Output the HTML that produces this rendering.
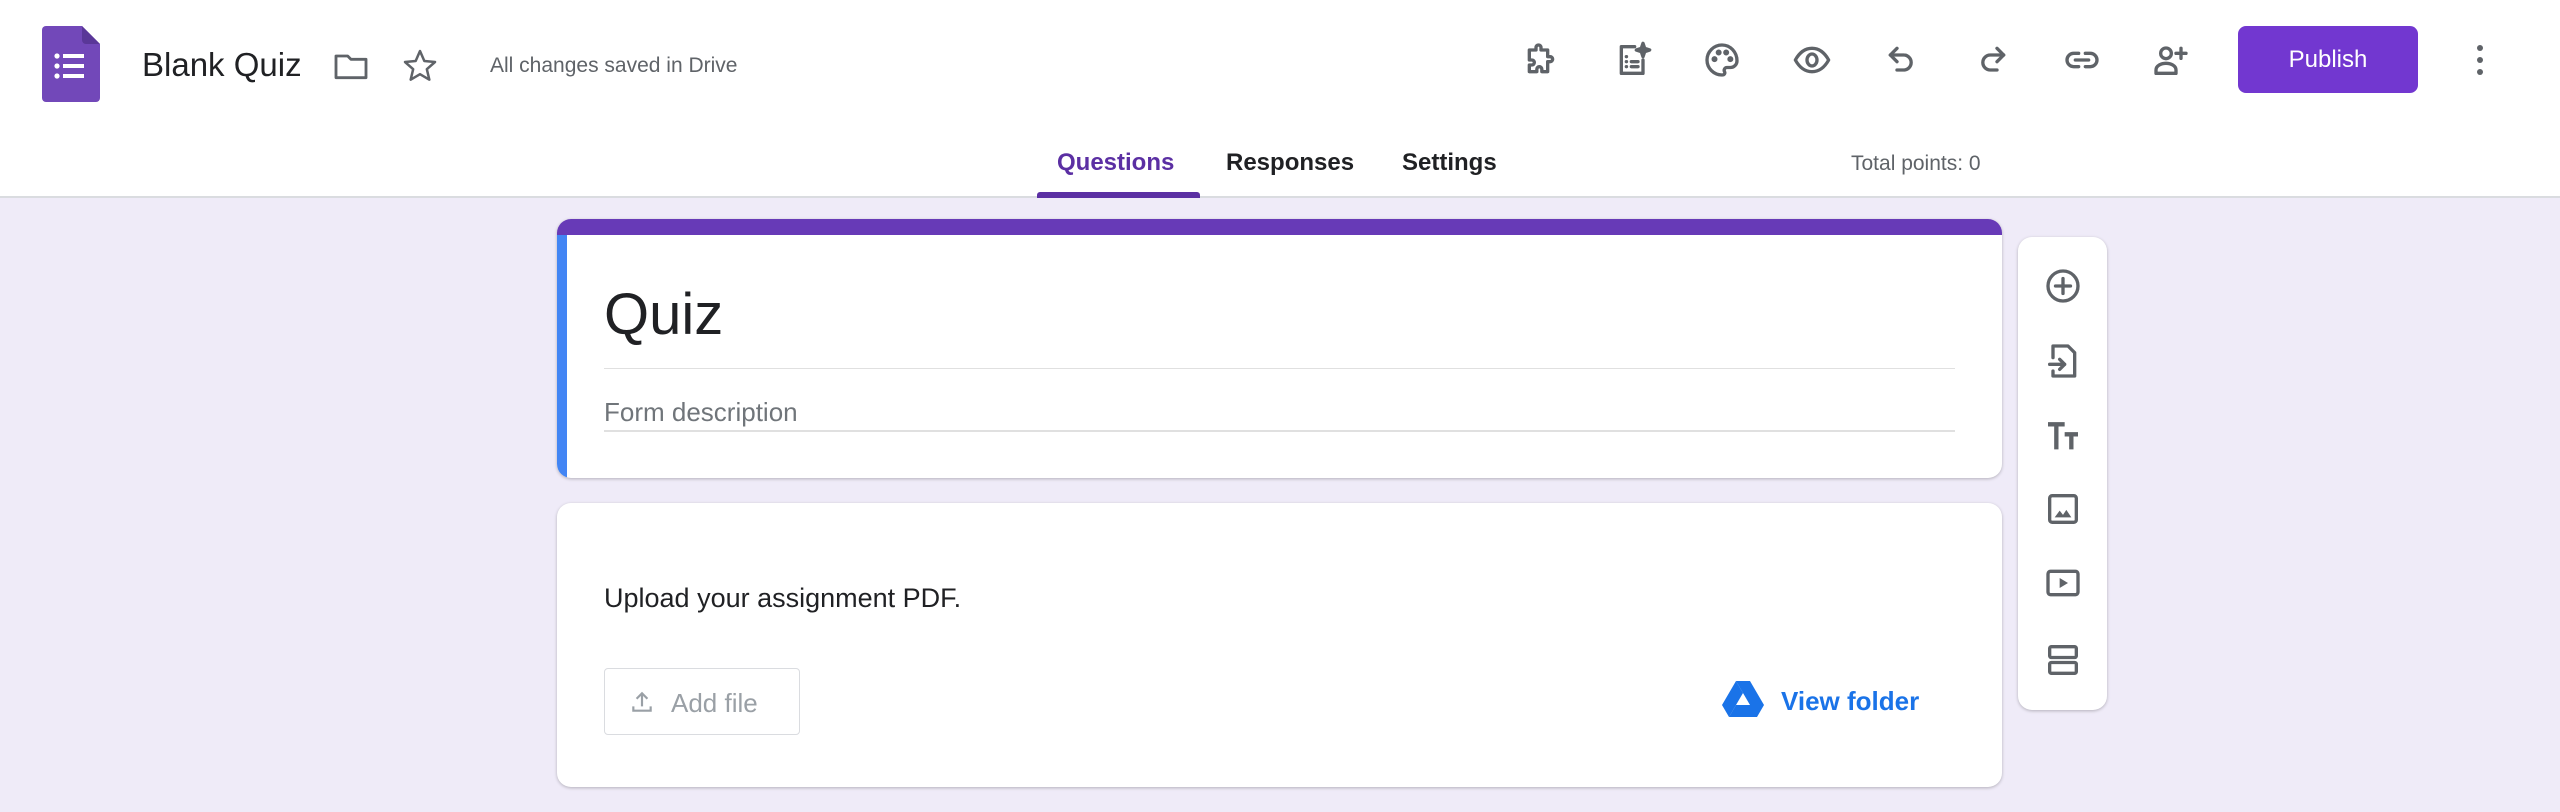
<!DOCTYPE html>
<html><head><meta charset="utf-8"><style>
*{margin:0;padding:0;box-sizing:border-box}
body{width:2560px;height:812px;overflow:hidden;background:#efebf8;font-family:"Liberation Sans",Arial,sans-serif;position:relative}
.hdr{position:absolute;left:0;top:0;width:2560px;height:198px;background:#fff;border-bottom:2px solid #dadce0}
.a{position:absolute}
.ic{position:absolute;width:40px;height:40px}
.ic svg{width:40px;height:40px;fill:none;stroke:#5f6368;stroke-width:2;stroke-linecap:round;stroke-linejoin:round}
.card{position:absolute;background:#fff;border-radius:14px;box-shadow:0 1px 3px rgba(0,0,0,.25)}
</style></head><body>
<div class="hdr">
  <svg class="a" style="left:42px;top:26px" width="58" height="76" viewBox="0 0 58 76">
    <path d="M4 0h36l18 18v54a4 4 0 0 1-4 4H4a4 4 0 0 1-4-4V4a4 4 0 0 1 4-4z" fill="#7248b9"/>
    <path d="M40 0l18 18H44a4 4 0 0 1-4-4z" fill="#5a3798"/>
    <circle cx="15" cy="30" r="2.6" fill="#fff"/><circle cx="15" cy="40" r="2.6" fill="#fff"/><circle cx="15" cy="50" r="2.6" fill="#fff"/>
    <rect x="21" y="28" width="21" height="4" fill="#fff"/><rect x="21" y="38" width="21" height="4" fill="#fff"/><rect x="21" y="48" width="21" height="4" fill="#fff"/>
  </svg>
  <div class="a" style="left:142px;top:46px;font-size:33px;color:#202124">Blank Quiz</div>
  <div class="ic" style="left:331px;top:46px"><svg viewBox="0 0 24 24" style="stroke-width:1.7"><path d="M3 6h7l2 2h9v11H3z"/></svg></div>
  <div class="ic" style="left:400px;top:46px"><svg viewBox="0 0 24 24" style="stroke-width:1.5"><path d="M12 3l2.6 6 6.4.6-4.9 4.3 1.5 6.3L12 16.9 6.4 20.2l1.5-6.3L3 9.6 9.4 9z"/></svg></div>
  <div class="a" style="left:490px;top:54px;font-size:21px;color:#5f6368">All changes saved in Drive</div>

  <div class="ic" style="left:1521px;top:40px"><svg viewBox="0 0 24 24"><path d="M5 6h4V4.5a1.5 1.5 0 0 1 3 0V6h4v4h1.5a1.5 1.5 0 0 1 0 3H16v6h-3.5v-1.5a1.5 1.5 0 0 0-3 0V19H5v-4h1.5a1.5 1.5 0 0 0 0-3H5z"/></svg></div>
  <div class="ic" style="left:1613px;top:40px"><svg viewBox="0 0 24 24"><path d="M13 4H5v16h13v-8"/><path d="M8 10h.1M8 13h.1M8 16h.1M11 13h4M11 16h4"/><path d="M18 2l1 3 3 1-3 1-1 3-1-3-3-1 3-1z" fill="#5f6368"/></svg></div>
  <div class="ic" style="left:1702px;top:40px"><svg viewBox="0 0 24 24"><path d="M12 3a9 9 0 0 0 0 18c1.5 0 2-1 1.5-2s0-2.5 1.5-2.5h2A4 4 0 0 0 21 12.5C21 7.3 17 3 12 3z"/><circle cx="7.5" cy="11.5" r=".8" fill="#5f6368"/><circle cx="10" cy="7.5" r=".8" fill="#5f6368"/><circle cx="14.5" cy="7.5" r=".8" fill="#5f6368"/><circle cx="17" cy="11.5" r=".8" fill="#5f6368"/></svg></div>
  <div class="ic" style="left:1792px;top:40px"><svg viewBox="0 0 24 24"><path d="M2 12c2.5-4.5 6-7 10-7s7.5 2.5 10 7c-2.5 4.5-6 7-10 7s-7.5-2.5-10-7z"/><ellipse cx="12" cy="12" rx="3" ry="3.6"/></svg></div>
  <div class="ic" style="left:1882px;top:40px"><svg viewBox="0 0 24 24"><path d="M9 5L5 9l4 4"/><path d="M5 9h8a4.5 4.5 0 0 1 0 9H9"/></svg></div>
  <div class="ic" style="left:1972px;top:40px"><svg viewBox="0 0 24 24"><path d="M15 5l4 4-4 4"/><path d="M19 9h-8a4.5 4.5 0 0 0 0 9h4"/></svg></div>
  <div class="ic" style="left:2062px;top:40px"><svg viewBox="0 0 24 24"><path d="M10 8H7a4 4 0 0 0 0 8h3M14 8h3a4 4 0 0 1 0 8h-3M8 12h8"/></svg></div>
  <div class="ic" style="left:2151px;top:40px"><svg viewBox="0 0 24 24"><circle cx="9" cy="8" r="3.2"/><path d="M3 20v-2c0-2.5 3-4 6-4s6 1.5 6 4v2z"/><path d="M18 5v6M15 8h6"/></svg></div>
  <div class="a" style="left:2238px;top:26px;width:180px;height:67px;background:#7237d0;border-radius:8px;color:#fff;font-size:24px;text-align:center;line-height:67px">Publish</div>
  <svg class="a" style="left:2470px;top:42px" width="20" height="36"><circle cx="10" cy="6" r="3" fill="#5f6368"/><circle cx="10" cy="18" r="3" fill="#5f6368"/><circle cx="10" cy="30" r="3" fill="#5f6368"/></svg>

  <div class="a" style="left:1057px;top:149px;font-size:24px;color:#5b2fa3;font-weight:bold">Questions</div>
  <div class="a" style="left:1037px;top:192px;width:163px;height:6px;background:#5b2fa3;border-radius:3px 3px 0 0"></div>
  <div class="a" style="left:1226px;top:149px;font-size:24px;color:#202124;font-weight:bold">Responses</div>
  <div class="a" style="left:1402px;top:149px;font-size:24px;color:#202124;font-weight:bold">Settings</div>
  <div class="a" style="left:1851px;top:152px;font-size:21px;color:#5f6368">Total points: 0</div>
</div>

<div class="card" style="left:557px;top:219px;width:1445px;height:259px;overflow:hidden">
  <div class="a" style="left:0;top:0;width:100%;height:16px;background:#673ab7"></div>
  <div class="a" style="left:0;top:16px;width:10px;height:243px;background:#4285f4"></div>
  <div class="a" style="left:47px;top:62px;font-size:58px;color:#202124">Quiz</div>
  <div class="a" style="left:47px;top:149px;width:1351px;height:1px;background:#e0e0e0"></div>
  <div class="a" style="left:47px;top:178px;font-size:26px;color:#70757a">Form description</div>
  <div class="a" style="left:47px;top:211px;width:1351px;height:2px;background:#e0e0e0"></div>
</div>

<div class="card" style="left:557px;top:503px;width:1445px;height:284px">
  <div class="a" style="left:47px;top:80px;font-size:27px;color:#202124">Upload your assignment PDF.</div>
  <div class="a" style="left:47px;top:165px;width:196px;height:67px;border:1px solid #dadce0;border-radius:4px">
    <svg class="a" style="left:24px;top:20px" width="26" height="26" viewBox="0 0 24 24" fill="none" stroke="#9aa0a6" stroke-width="2"><path d="M12 16V4M7 9l5-5 5 5M4 16v4h16v-4"/></svg>
    <div class="a" style="left:66px;top:19px;font-size:26px;color:#9aa0a6">Add file</div>
  </div>
  <svg class="a" style="left:1165px;top:178px" width="42" height="38" viewBox="0 0 42 38"><path d="M14 0h14l14 24h-14z" fill="#1a73e8"/><path d="M14 0L0 24l7 12 14-24z" fill="#1a73e8"/><path d="M7 36h28l7-12H14z" fill="#1a73e8"/></svg>
  <div class="a" style="left:1224px;top:183px;font-size:26px;color:#1a73e8;font-weight:bold">View folder</div>
</div>

<div class="card" style="left:2018px;top:237px;width:89px;height:473px">
  <div class="ic" style="left:25px;top:29px"><svg viewBox="0 0 24 24"><circle cx="12" cy="12" r="9"/><path d="M12 7.5v9M7.5 12h9"/></svg></div>
  <div class="ic" style="left:25px;top:104px"><svg viewBox="0 0 24 24"><path d="M6 10V3h9l4 4v14H6v-3"/><path d="M4 14h9M10 11l3 3-3 3"/></svg></div>
  <div class="ic" style="left:25px;top:179px"><svg viewBox="0 0 24 24" style="stroke-width:2.6;stroke-linecap:butt"><path d="M3 5h10M8 5v15M13 11h8M17 11v9"/></svg></div>
  <div class="ic" style="left:25px;top:252px"><svg viewBox="0 0 24 24"><rect x="4" y="4" width="16" height="16" rx="1.5"/><path d="M7 17l3-4 2 2.5 2-3 3 4.5z" fill="#5f6368" stroke-width="0"/></svg></div>
  <div class="ic" style="left:25px;top:326px"><svg viewBox="0 0 24 24"><rect x="3" y="5" width="18" height="14" rx="1.5"/><path d="M10 9l5 3-5 3z" fill="#5f6368" stroke-width="0"/></svg></div>
  <div class="ic" style="left:25px;top:403px"><svg viewBox="0 0 24 24"><rect x="4" y="4" width="16" height="6.5" rx="1"/><rect x="4" y="13.5" width="16" height="6.5" rx="1"/></svg></div>
</div>
</body></html>
